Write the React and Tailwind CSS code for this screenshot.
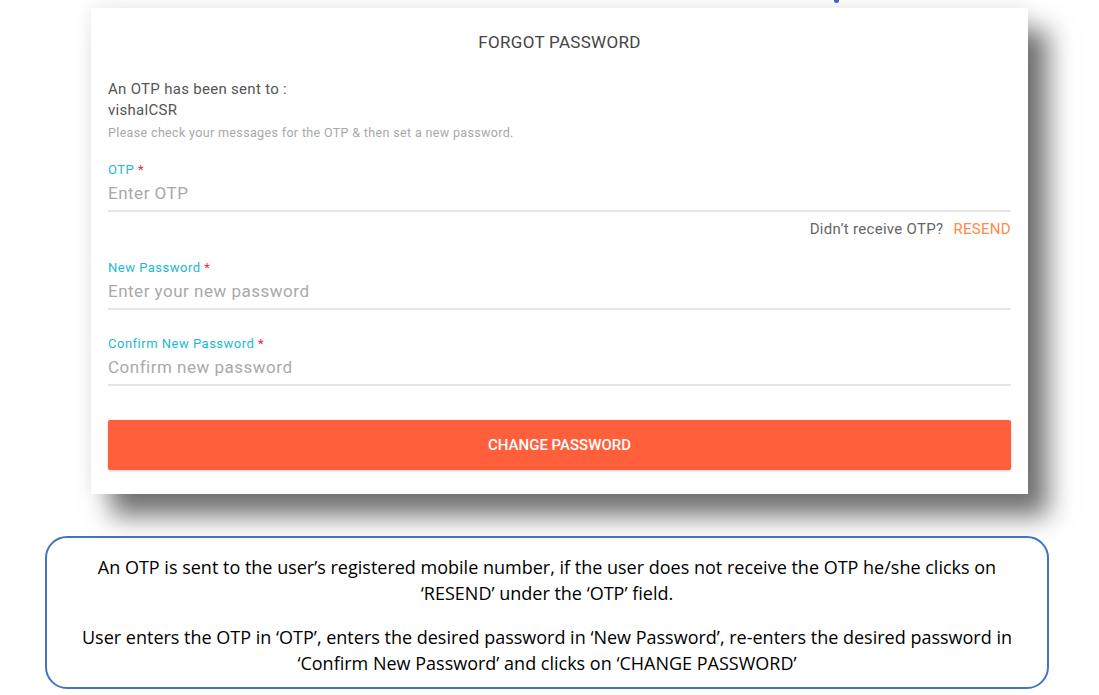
export default function App() {
  const fields = [
    { label: "OTP", placeholder: "Enter OTP", resend: true, gap: "mt-[21px]" },
    { label: "New Password", placeholder: "Enter your new password", gap: "mt-[22px]" },
    { label: "Confirm New Password", placeholder: "Confirm new password", gap: "mt-[26px]" },
  ];

  return (
    <div className="relative w-[1099px] h-[695px] overflow-hidden bg-white font-['Roboto',sans-serif]">
      {/* arrow tip cut off at the top */}
      <div className="absolute left-[834px] top-0 w-[5px] h-[3px] rounded-b-full bg-[#3a66c8]" />

      {/* Card */}
      <div className="ml-[91px] mt-[8px] w-[937px] h-[486px] bg-white px-[17px] shadow-[20px_22px_24px_rgba(0,0,0,0.55),0_-2px_18px_rgba(0,0,0,0.08)]">
        <h1 className="pt-[24px] text-center text-[17px] leading-[20px] tracking-[0.3px] text-[#444]">
          FORGOT PASSWORD
        </h1>

        <div className="mt-[27px] text-[15px] leading-[21px] tracking-[0.3px] text-[#555]">
          <p>An OTP has been sent to :</p>
          <p>vishalCSR</p>
          <p className="mt-[4px] text-[12.5px] leading-[16px] tracking-[0.35px] text-[#a8a8a8]">
            Please check your messages for the OTP &amp; then set a new password.
          </p>
        </div>

        {fields.map((f, idx) => (
          <div key={idx} className={f.gap}>
            <label className="block text-[13px] leading-[16px] tracking-[0.5px] text-[#1cb9cf]">
              {f.label} <span className="text-[#f0243a]">*</span>
            </label>
            <div className="mt-[5px] pb-[7px] border-b-2 border-[#e6e6e6] text-[17px] leading-[20px] tracking-[0.5px] text-[#a9a9a9]">
              {f.placeholder}
            </div>
            {f.resend && (
              <div className="mt-[8px] flex justify-end gap-[10px] text-[15px] leading-[18px] tracking-[0.3px]">
                <span className="text-[#666]">Didn’t receive OTP?</span>
                <span className="text-[#ff8a4c]">RESEND</span>
              </div>
            )}
          </div>
        ))}

        <button className="mt-[34px] w-full h-[50px] rounded-[2px] bg-[#ff603b] text-[15px] font-medium text-white shadow-[0_1px_3px_rgba(0,0,0,0.2)]">
          CHANGE PASSWORD
        </button>
      </div>

      {/* Description box */}
      <div className="ml-[45px] mt-[42px] w-[1004px] h-[153px] rounded-[22px] border-2 border-[#4472c4] pt-[16px] text-center text-[18px] leading-[26px] text-black font-['Open_Sans',sans-serif]">
        <p>
          An OTP is sent to the user’s registered mobile number, if the user does not receive the OTP he/she clicks on
          <br />
          ‘RESEND’ under the ‘OTP’ field.
        </p>
        <p className="mt-[18px]">
          User enters the OTP in ‘OTP’, enters the desired password in ‘New Password’, re-enters the desired password in
          <br />
          ‘Confirm New Password’ and clicks on ‘CHANGE PASSWORD’
        </p>
      </div>
    </div>
  );
}
